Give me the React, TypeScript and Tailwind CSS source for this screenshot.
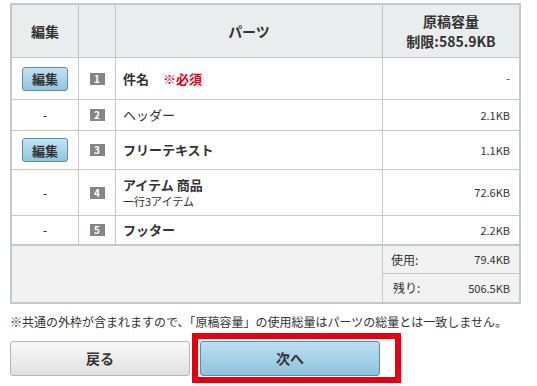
import React from "react";

const font = { fontFamily: '"Noto Sans CJK JP", "Liberation Sans", sans-serif' };

function Badge({ n }: { n: number }) {
  return (
    <span className="inline-flex h-[12px] w-[15px] items-center justify-center bg-[#858585] text-[10px] font-bold leading-none text-white">
      {n}
    </span>
  );
}

function EditButton() {
  return (
    <button className="h-[24px] w-[46px] rounded-[3px] border border-[#5b8db3] bg-gradient-to-b from-[#c4e3f4] to-[#93c5de] text-[13px] font-bold leading-none text-[#333]">
      編集
    </button>
  );
}

const rows = [
  { h: "h-[41px]", edit: true, n: 1, label: <span className="font-bold">件名<span className="ml-[14px] text-[#e0001b]">※必須</span></span>, size: "-" },
  { h: "h-[30px]", edit: false, n: 2, label: <span>ヘッダー</span>, size: "2.1KB" },
  { h: "h-[38px]", edit: true, n: 3, label: <span className="font-bold">フリーテキスト</span>, size: "1.1KB" },
  {
    h: "h-[45px]",
    edit: false,
    n: 4,
    label: (
      <div className="flex flex-col leading-[17px]">
        <span className="font-bold">アイテム 商品</span>
        <span className="text-[11px]">一行3アイテム</span>
      </div>
    ),
    size: "72.6KB",
  },
  { h: "h-[28px]", edit: false, n: 5, label: <span className="font-bold">フッター</span>, size: "2.2KB" },
];

export default function App() {
  return (
    <div className="min-h-screen bg-white pt-[3px] text-[#333]" style={font}>
      {/* Parts table */}
      <div className="ml-[10px] w-[511px] border-2 border-[#c2c9c7]">
        <div className="grid h-[52px] grid-cols-[66px_37px_267px_137px] bg-[#e9eded] text-[14px] font-bold">
          <div className="flex items-center justify-center">編集</div>
          <div className="border-l border-[#c2c9c7]" />
          <div className="flex items-center justify-center border-l border-[#c2c9c7]">パーツ</div>
          <div className="flex flex-col items-center justify-center border-l border-[#c2c9c7] leading-[20px]">
            <span>原稿容量</span>
            <span>制限:585.9KB</span>
          </div>
        </div>

        {rows.map((r) => (
          <div
            key={r.n}
            className={`grid ${r.h} box-content grid-cols-[66px_37px_267px_137px] border-t border-[#c2c9c7] text-[13px]`}
          >
            <div className="flex items-center justify-center">{r.edit ? <EditButton /> : <span>-</span>}</div>
            <div className="flex items-center justify-center border-l border-[#c2c9c7]">
              <Badge n={r.n} />
            </div>
            <div className="flex items-center border-l border-[#c2c9c7] pl-[7px]">{r.label}</div>
            <div className="flex items-center justify-end border-l border-[#c2c9c7] pr-[9px] text-[11px]">{r.size}</div>
          </div>
        ))}

        <div className="grid grid-cols-[370px_137px] border-t-2 border-[#c2c9c7] bg-[#f2f2f2] text-[11px]">
          <div />
          <div className="flex flex-col border-l border-[#c2c9c7]">
            <div className="flex h-[28px] items-center justify-between border-b border-[#c2c9c7] pl-[8px] pr-[9px]">
              <span className="text-[12px]">使用:</span>
              <span>79.4KB</span>
            </div>
            <div className="flex h-[28px] items-center justify-between pl-[10px] pr-[9px]">
              <span className="text-[12px]">残り:</span>
              <span>506.5KB</span>
            </div>
          </div>
        </div>
      </div>

      <p className="ml-[10px] mt-[10px] whitespace-nowrap text-[12px] leading-[15px]">
        ※共通の外枠が含まれますので、「原稿容量」の使用総量はパーツの総量とは一致しません。
      </p>

      {/* Buttons */}
      <div className="ml-[10px] mt-[4px] flex items-start">
        <button className="mt-[8px] h-[35px] w-[180px] rounded-[3px] border border-[#b5b5b5] bg-gradient-to-b from-[#f8f8f8] to-[#e1e1e1] text-[14px] font-bold text-[#333]">
          戻る
        </button>
        <div className="ml-[2px] h-[50px] w-[209px] border-[6px] border-[#e60012] pl-[2px] pt-[2px]">
          <button className="h-[35px] w-[180px] rounded-[3px] border border-[#5b8db3] bg-gradient-to-b from-[#bcdff2] to-[#8fc3dc] text-[14px] font-bold text-[#333]">
            次へ
          </button>
        </div>
      </div>
    </div>
  );
}
